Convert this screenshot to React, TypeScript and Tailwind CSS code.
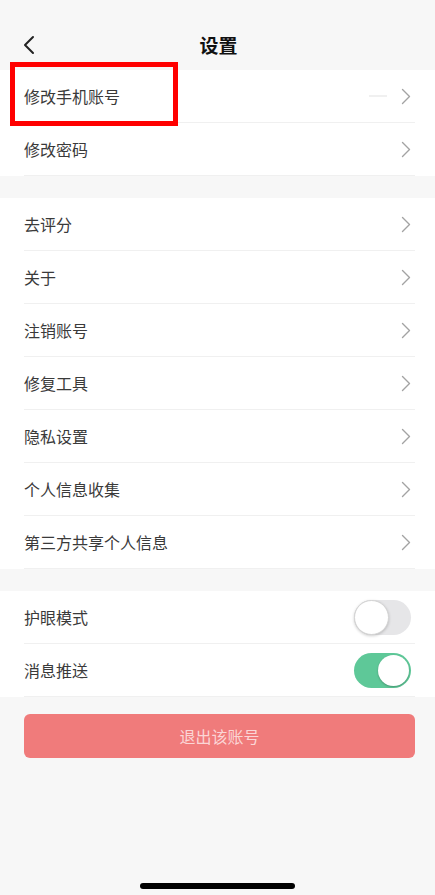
import React from "react";

const font = { fontFamily: '"Noto Sans CJK SC", "Noto Sans", sans-serif' };

function Chevron() {
  return (
    <svg width="10" height="17" viewBox="0 0 10 17" fill="none" className="mr-[4px]">
      <path d="M1.5 1.5 L8.5 8.5 L1.5 15.5" stroke="#a3a3a3" strokeWidth="1.4" strokeLinecap="round" strokeLinejoin="round" />
    </svg>
  );
}

function Toggle({ on }: { on: boolean }) {
  return (
    <div
      className={
        on
          ? "w-[57px] h-[35px] rounded-full bg-[#5ec898] p-[2px] flex justify-end mr-[4px]"
          : "w-[57px] h-[35px] rounded-full bg-[#e6e6e8] flex justify-start mr-[4px]"
      }
    >
      <div
        className={
          on
            ? "w-[31px] h-[31px] rounded-full bg-white shadow-[0_1px_2px_rgba(0,0,0,0.25)]"
            : "w-[35px] h-[35px] rounded-full bg-white border border-[#d4d4d4] shadow-[0_1px_3px_rgba(0,0,0,0.2)]"
        }
      />
    </div>
  );
}

function Row({ label, right, extra }: { label: string; right: React.ReactNode; extra?: React.ReactNode }) {
  return (
    <div className="h-[53px] ml-[24px] mr-[20px] border-b border-[#f0f0f0] flex items-center justify-between">
      <span className="text-[16px] text-[#3a3a3a]">{label}</span>
      <div className="flex items-center gap-[14px]">
        {extra}
        {right}
      </div>
    </div>
  );
}

export default function App() {
  return (
    <div className="w-[435px] min-h-[895px] bg-[#f7f7f7] flex flex-col relative" style={font}>
      <div className="h-[70px] flex flex-col justify-end">
        <div className="h-[50px] flex items-center relative">
          <svg width="14" height="20" viewBox="0 0 14 20" className="ml-[22px]" fill="none">
            <path d="M11 2 L3 10 L11 18" stroke="#222" strokeWidth="2" strokeLinecap="round" strokeLinejoin="round" />
          </svg>
          <div className="absolute left-[2px] right-0 text-center text-[19px] font-bold text-[#111] pointer-events-none">设置</div>
        </div>
      </div>

      <div className="bg-white">
        <Row label="修改手机账号" right={<Chevron />} extra={<span className="w-[18px] h-[2px] bg-[#f0f0f0]" />} />
        <Row label="修改密码" right={<Chevron />} />
      </div>

      <div className="h-[22px]" />

      <div className="bg-white">
        <Row label="去评分" right={<Chevron />} />
        <Row label="关于" right={<Chevron />} />
        <Row label="注销账号" right={<Chevron />} />
        <Row label="修复工具" right={<Chevron />} />
        <Row label="隐私设置" right={<Chevron />} />
        <Row label="个人信息收集" right={<Chevron />} />
        <Row label="第三方共享个人信息" right={<Chevron />} />
      </div>

      <div className="h-[22px]" />

      <div className="bg-white">
        <Row label="护眼模式" right={<Toggle on={false} />} />
        <Row label="消息推送" right={<Toggle on={true} />} />
      </div>

      <div className="px-[24px] pr-[20px] mt-[17px]">
        <div className="h-[44px] rounded-[6px] bg-[#f07b7b] flex items-center justify-center text-[16px] text-[#fbd6d6]">
          退出该账号
        </div>
      </div>

      <div className="flex-1" />
      <div className="flex justify-center pb-[6px]">
        <div className="w-[155px] h-[6px] rounded-full bg-black" />
      </div>

      <div className="absolute left-[10px] top-[62px] w-[168px] h-[64px] border-[5px] border-[#ff0000]" />
    </div>
  );
}
